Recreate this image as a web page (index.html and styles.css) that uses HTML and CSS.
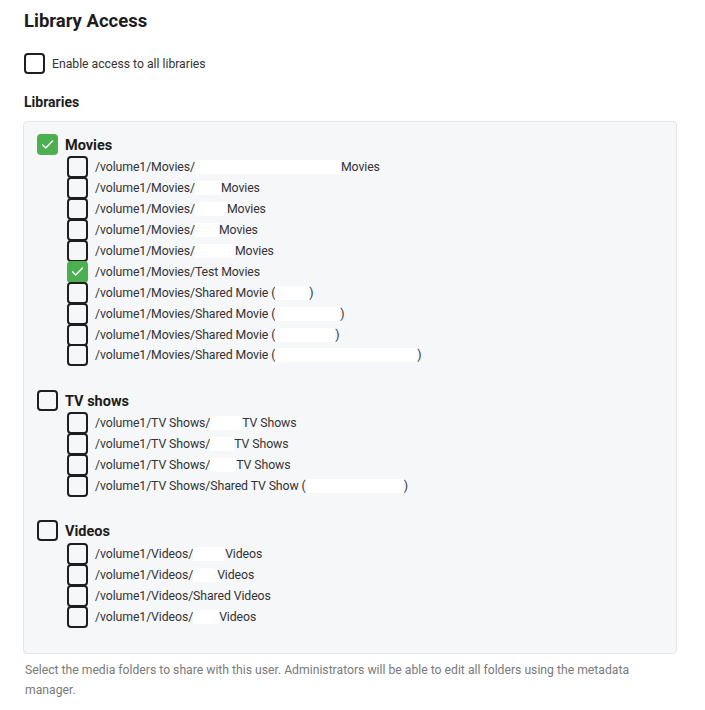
FILE: index.html
```html
<!DOCTYPE html>
<html>
<head>
<meta charset="utf-8">
<link rel="stylesheet" href="styles.css">
</head>
<body>
<div class="page">
  <h1 class="title">Library Access</h1>
  <label class="row enable">
    <span class="cb"></span>
    <span class="enable-text">Enable access to all libraries</span>
  </label>
  <h2 class="subtitle">Libraries</h2>
  <div class="panel">
    <div class="group">
      <div class="head"><span class="cb on"><svg viewBox="0 0 24 24"><path d="M5 12.5l4.5 4.5 9.5-10"/></svg></span><span class="head-text">Movies</span></div>
      <div class="items">
        <div class="item"><span class="cb"></span><span class="path">/volume1/Movies/<span class="rd w146"></span>Movies</span></div>
        <div class="item"><span class="cb"></span><span class="path">/volume1/Movies/<span class="rd w26"></span>Movies</span></div>
        <div class="item"><span class="cb"></span><span class="path">/volume1/Movies/<span class="rd w32"></span>Movies</span></div>
        <div class="item"><span class="cb"></span><span class="path">/volume1/Movies/<span class="rd w24"></span>Movies</span></div>
        <div class="item"><span class="cb"></span><span class="path">/volume1/Movies/<span class="rd w40"></span>Movies</span></div>
        <div class="item"><span class="cb on"><svg viewBox="0 0 24 24"><path d="M5 12.5l4.5 4.5 9.5-10"/></svg></span><span class="path">/volume1/Movies/Test Movies</span></div>
        <div class="item"><span class="cb"></span><span class="path">/volume1/Movies/Shared Movie (<span class="rd w34"></span>)</span></div>
        <div class="item"><span class="cb"></span><span class="path">/volume1/Movies/Shared Movie (<span class="rd w65"></span>)</span></div>
        <div class="item"><span class="cb"></span><span class="path">/volume1/Movies/Shared Movie (<span class="rd w60"></span>)</span></div>
        <div class="item"><span class="cb"></span><span class="path">/volume1/Movies/Shared Movie (<span class="rd w142"></span>)</span></div>
      </div>
    </div>
    <div class="group">
      <div class="head"><span class="cb"></span><span class="head-text">TV shows</span></div>
      <div class="items">
        <div class="item"><span class="cb"></span><span class="path">/volume1/TV Shows/<span class="rd w32"></span>TV Shows</span></div>
        <div class="item"><span class="cb"></span><span class="path">/volume1/TV Shows/<span class="rd w24"></span>TV Shows</span></div>
        <div class="item"><span class="cb"></span><span class="path">/volume1/TV Shows/<span class="rd w26"></span>TV Shows</span></div>
        <div class="item"><span class="cb"></span><span class="path">/volume1/TV Shows/Shared TV Show (<span class="rd w98"></span>)</span></div>
      </div>
    </div>
    <div class="group">
      <div class="head"><span class="cb"></span><span class="head-text">Videos</span></div>
      <div class="items">
        <div class="item"><span class="cb"></span><span class="path">/volume1/Videos/<span class="rd w32"></span>Videos</span></div>
        <div class="item"><span class="cb"></span><span class="path">/volume1/Videos/<span class="rd w24"></span>Videos</span></div>
        <div class="item"><span class="cb"></span><span class="path">/volume1/Videos/Shared Videos</span></div>
        <div class="item"><span class="cb"></span><span class="path">/volume1/Videos/<span class="rd w26"></span>Videos</span></div>
      </div>
    </div>
  </div>
  <p class="help">Select the media folders to share with this user. Administrators will be able to edit all folders using the metadata manager.</p>
</div>
</body>
</html>
```
FILE: styles.css
```css
* { box-sizing: border-box; }
html, body { margin: 0; padding: 0; background: #fff; }
body { font-family: Roboto, "Noto Sans", sans-serif; color: #202020; }
.page { padding: 9px 28px 0 24px; }
.title { margin: 0; font-size: 18.5px; line-height: 24px; font-weight: 700; color: #1c1c1c; }
.row { display: flex; align-items: center; }
.enable { margin-top: 20px; gap: 7px; }
.enable-text { font-size: 12.2px; color: #333; }
.subtitle { margin: 18px 0 0; font-size: 14px; line-height: 20px; font-weight: 700; color: #1c1c1c; }
.panel {
  margin-top: 9px;
  width: 654px;
  margin-left: -1px;
  background: #f6f7f9;
  border: 1px solid #e4e5e7;
  border-radius: 4px;
  padding: 12px 13px 26px;
  display: flex;
  flex-direction: column;
  gap: 24px;
}
.cb {
  flex: none;
  width: 21px; height: 21px;
  border: 2px solid #1e1e1e;
  border-radius: 4px;
  background: transparent;
  display: flex; align-items: center; justify-content: center;
}
.cb.on { background: #4caf50; border-color: #4caf50; }
.cb svg { width: 19px; height: 19px; fill: none; stroke: #fff; stroke-width: 2; stroke-linecap: round; stroke-linejoin: round; }
.head { display: flex; align-items: center; gap: 7px; height: 21px; }
.head-text { font-size: 14.5px; font-weight: 700; color: #1c1c1c; position: relative; top: 1px; }
.items { margin-top: 2px; padding-left: 30px; display: flex; flex-direction: column; }
.item { display: flex; align-items: center; gap: 7px; height: 20.9px; }
.item .cb { height: 22px; margin: -0.5px 0; }
.path { font-size: 12.3px; color: #333; white-space: nowrap; letter-spacing: -0.1px; }
.rd { display: inline-block; height: 14px; vertical-align: -3px; background: #fff; }
.w24 { width: 24px; } .w26 { width: 26px; } .w32 { width: 32px; } .w34 { width: 34px; }
.w40 { width: 40px; } .w60 { width: 60px; } .w65 { width: 65px; } .w98 { width: 98px; }
.w142 { width: 142px; } .w146 { width: 146px; }
.help { margin: 6px 0 0 1px; font-size: 12.2px; line-height: 20px; color: #7a7a7a; max-width: 630px; }
```
